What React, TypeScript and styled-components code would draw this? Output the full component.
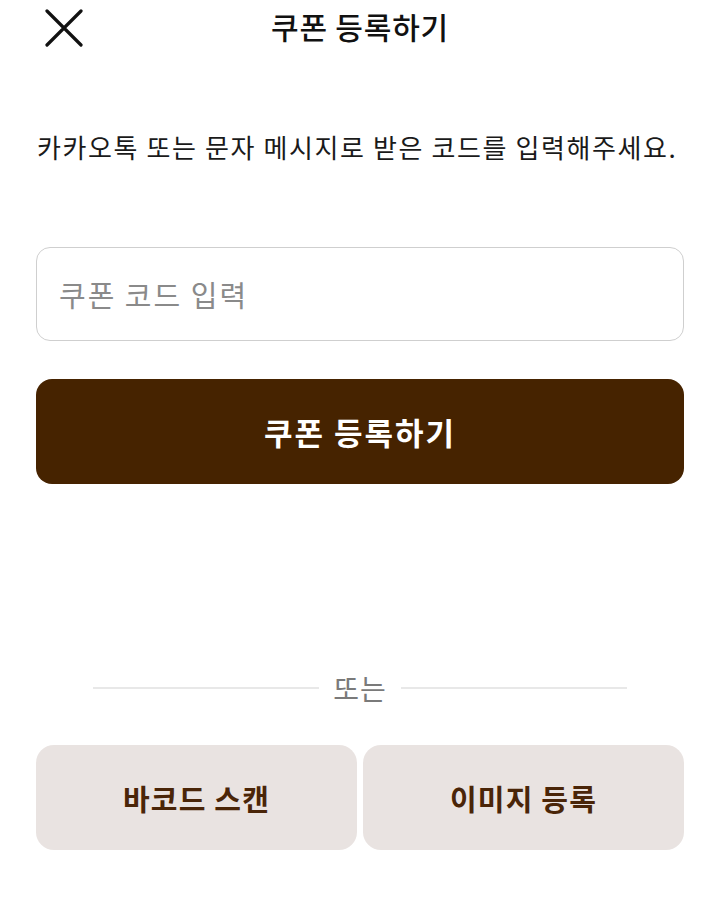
import React, { FC } from 'react'
import styled, { createGlobalStyle } from 'styled-components'

const GlobalStyle = createGlobalStyle`
  html, body {
    margin: 0;
    padding: 0;
    background: #ffffff;
    font-family: "Noto Sans CJK KR", "Noto Sans", sans-serif;
  }
`

const Page = styled.main`
  width: 720px;
  min-height: 899px;
  display: flex;
  flex-direction: column;
  box-sizing: border-box;
  padding: 0 36px;
`

const Header = styled.header`
  height: 58px;
  display: grid;
  grid-template-columns: 60px 1fr 60px;
  align-items: center;
`

const CloseButton = styled.button`
  width: 48px;
  height: 48px;
  margin-left: 4px;
  margin-top: -2px;
  padding: 0;
  border: none;
  background: none;
  display: flex;
  align-items: center;
  justify-content: center;
`

const Title = styled.h1`
  margin: -6px 0 0;
  text-align: center;
  font-size: 30px;
  font-weight: 500;
  color: #111;
  letter-spacing: 0.8px;
`

const Description = styled.p`
  margin: 67px 0 0;
  font-size: 26px;
  line-height: 44px;
  color: #1a1a1a;
  letter-spacing: 1.6px;
  padding-left: 1px;
  white-space: nowrap;
`

const CodeInput = styled.input`
  margin-top: 78px;
  height: 94px;
  box-sizing: border-box;
  border: 1.5px solid #cfcfcf;
  border-radius: 14px;
  padding: 0 22px;
  font-family: inherit;
  font-size: 29px;
  letter-spacing: 2px;
  color: #222;
  outline: none;

  &::placeholder {
    color: #8a8a8a;
  }
`

const PrimaryButton = styled.button`
  margin-top: 38px;
  height: 105px;
  border: none;
  border-radius: 16px;
  background: #462300;
  color: #ffffff;
  font-family: inherit;
  font-size: 31px;
  font-weight: 700;
  letter-spacing: 2px;
`

const Divider = styled.div`
  margin-top: 186px;
  padding: 0 57px;
  display: flex;
  align-items: center;
  gap: 14px;

  &::before,
  &::after {
    content: '';
    flex: 1;
    height: 1.5px;
    background: #e8e8e8;
  }
`

const DividerLabel = styled.span`
  font-size: 28px;
  line-height: 36px;
  color: #7a7a7a;
  letter-spacing: 1px;
`

const ActionRow = styled.div`
  margin-top: 39px;
  display: grid;
  grid-template-columns: 1fr 1fr;
  gap: 6px;
`

const SecondaryButton = styled.button`
  height: 105px;
  border: none;
  border-radius: 18px;
  background: #e9e3e1;
  color: #4a2508;
  font-family: inherit;
  font-size: 29px;
  font-weight: 700;
  letter-spacing: 1.2px;
`

const CloseIcon: FC = () => (
  <svg width="38" height="38" viewBox="0 0 38 38" fill="none">
    <path d="M2 2L36 36M36 2L2 36" stroke="#111" strokeWidth="3.2" strokeLinecap="round" />
  </svg>
)

const App: FC = () => {
  return (
    <>
      <GlobalStyle />
      <Page>
        <Header>
          <CloseButton aria-label="닫기">
            <CloseIcon />
          </CloseButton>
          <Title>쿠폰 등록하기</Title>
          <span />
        </Header>
        <Description>카카오톡 또는 문자 메시지로 받은 코드를 입력해주세요.</Description>
        <CodeInput placeholder="쿠폰 코드 입력" />
        <PrimaryButton>쿠폰 등록하기</PrimaryButton>
        <Divider>
          <DividerLabel>또는</DividerLabel>
        </Divider>
        <ActionRow>
          <SecondaryButton>바코드 스캔</SecondaryButton>
          <SecondaryButton>이미지 등록</SecondaryButton>
        </ActionRow>
      </Page>
    </>
  )
}

export default App
